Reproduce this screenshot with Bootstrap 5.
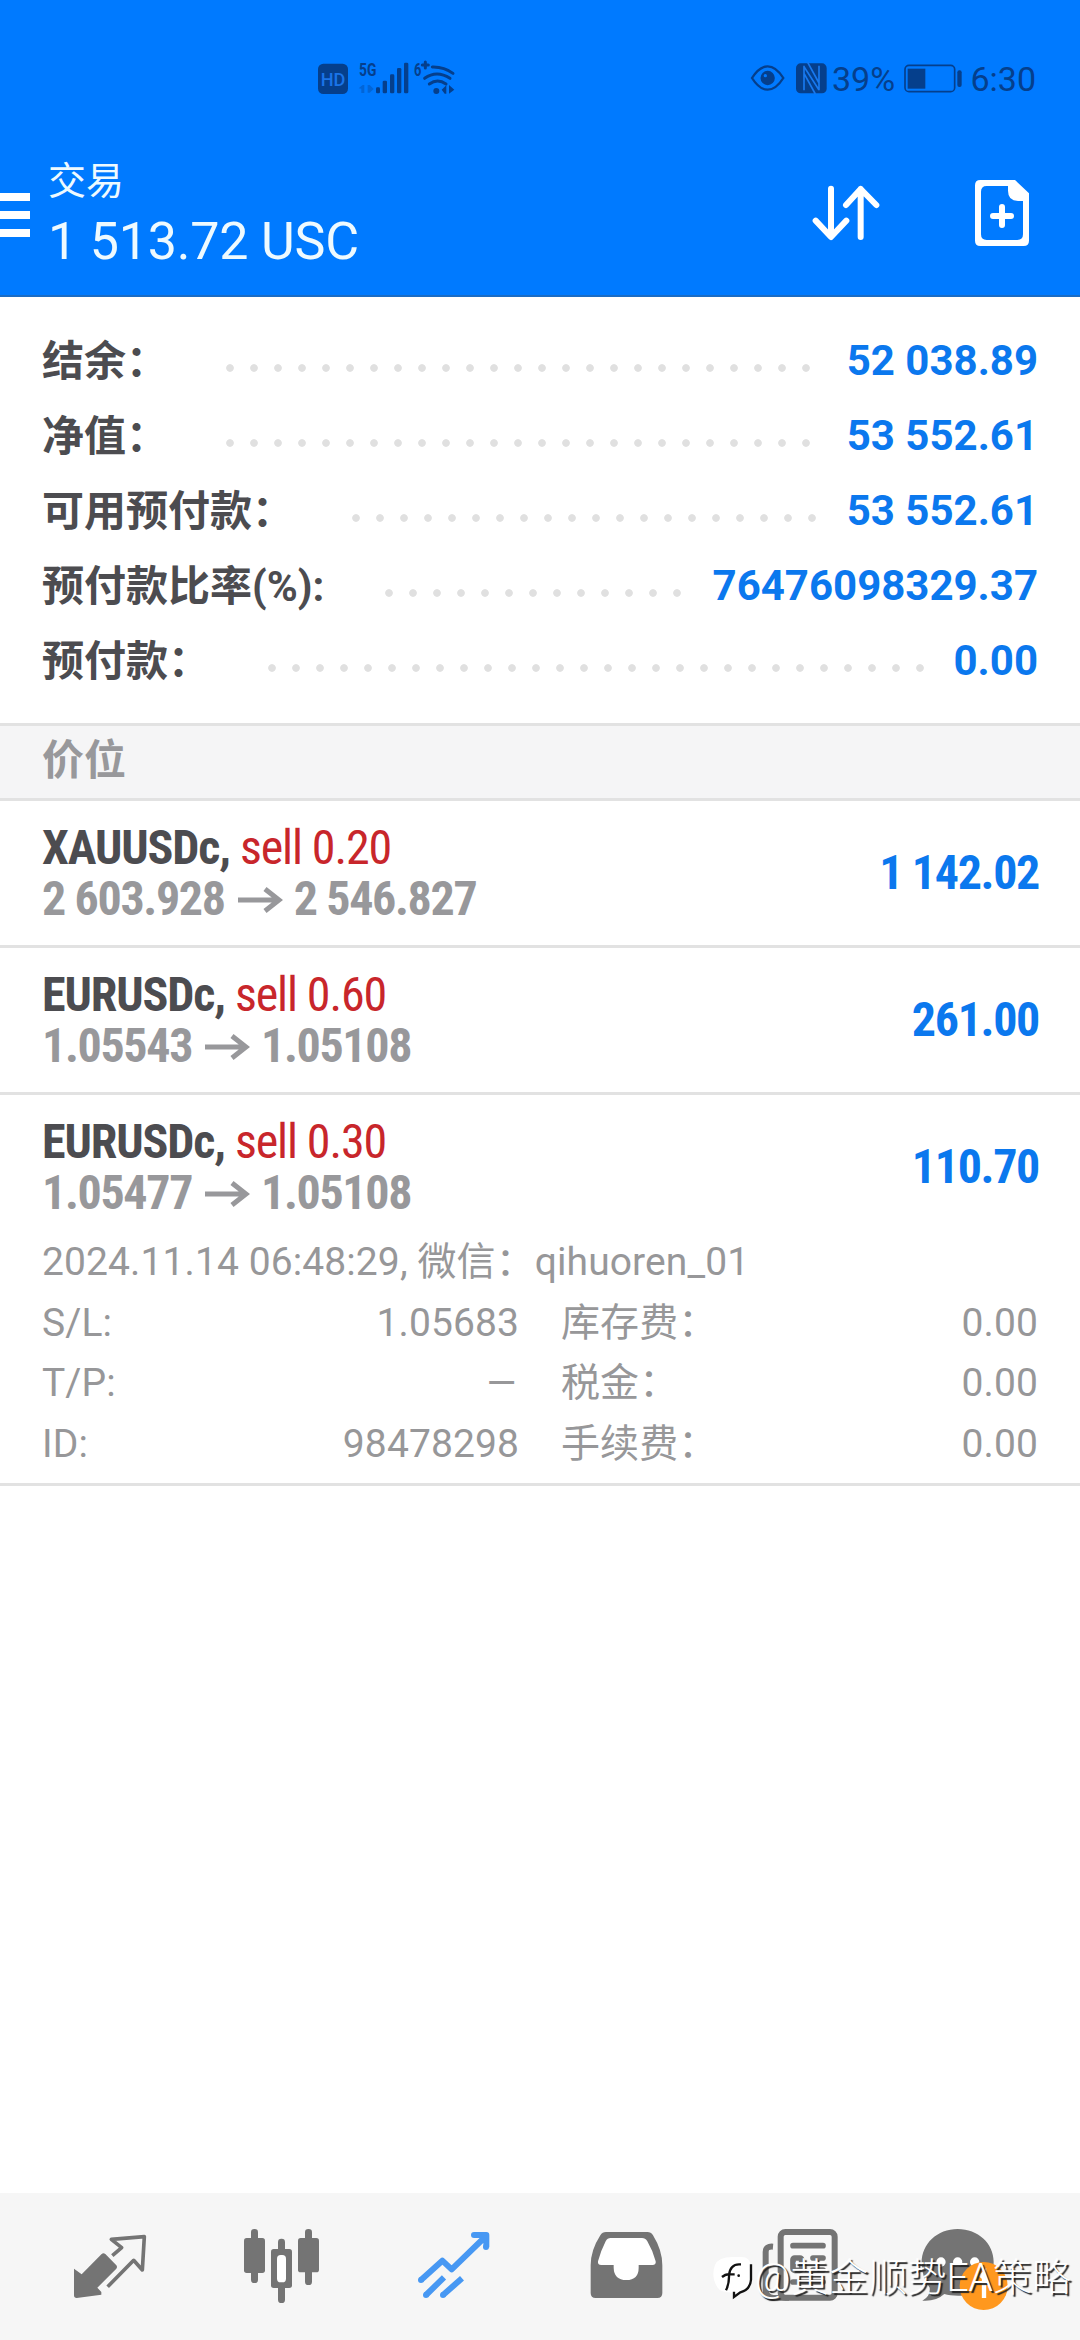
<!DOCTYPE html>
<html lang="zh-CN">
<head>
<meta charset="utf-8">
<meta name="viewport" content="width=device-width, initial-scale=1">
<title>交易</title>
<link rel="stylesheet" href="https://cdn.jsdelivr.net/npm/bootstrap@5.3.0/dist/css/bootstrap.min.css">
<style>
body{font-family:Roboto,"Noto Sans CJK SC",sans-serif;color:#4c4c50;background:#fff}
.screen{width:1080px;height:2340px}
svg{display:block;flex:none}
.app-head{height:297px;background:#007aff;border-bottom:2px solid #1b6cc4}
.status{height:80px;margin-top:40px;padding-left:300px;color:#053f8c;font-size:34px;line-height:78px}
.status-right{width:350px}
.charge{padding-left:2px}
.clock{padding:0 44px 0 5px}
.bar{height:175px}
.bar-title{font-size:38px;line-height:48px;color:#eefaff;padding-left:18px;padding-top:37px}
.bar-sum{font-size:52px;line-height:74px;letter-spacing:-.2px}
.summary{padding:26px 42px 25px}
.sum-row{height:75px;font-size:42px;line-height:75px;font-weight:700}
.sum-label{padding-top:1px}
.sum-wide{padding-right:3px}
.dots{height:8px;margin:15px 28px 0 58px;background:radial-gradient(circle at 4px 4px,#e0e0e0 3.4px,transparent 4.2px) 0 0/24px 8px repeat-x}
.blue{color:#0b78ee}
.band{height:78px;border-top:3px solid #e2e2e2;border-bottom:3px solid #e2e2e2;background:#f5f5f6;padding-left:42px;font-size:42px;line-height:70px;font-weight:700;color:#98989b}
.pos{border-bottom:3px solid #e2e2e2;padding:0 42px}
.pos-main{height:144px;font-size:48px;line-height:51px;font-weight:700}
.cond{font-family:"Roboto Condensed",Roboto,sans-serif;font-stretch:75%;white-space:nowrap;letter-spacing:-1.1px}
.cond .muted,.profit{letter-spacing:-1.35px}
.profit{padding-bottom:2px;margin-right:-1px}
.sell{color:#c8262b;font-weight:400}
.muted{color:#98989b}
.arrow{display:inline-block;margin:0 11px 5px 13px;vertical-align:middle}
.detail{font-size:39px;line-height:60.7px;letter-spacing:.1px;color:#979799;margin-top:-7px;padding-bottom:8px}
.dash{transform:scaleX(1.3);transform-origin:right}
.tabs{height:147px;background:#f6f6f6;padding:0 24px;color:#747474}
.wm{position:absolute;right:9px;bottom:32px;color:#fff;font-size:39px;line-height:60px;font-weight:300;text-shadow:2px 2px 1px #222}
</style>
</head>
<body>
<div class="screen d-flex flex-column position-relative overflow-hidden">
  <header class="app-head d-flex flex-column">
    <div class="status d-flex justify-content-between">
      <svg width="180" height="80" viewBox="0 0 540 240" fill="#053f8c">
        <rect x="54" y="71" width="90" height="91" rx="16"/>
        <text x="99" y="137" text-anchor="middle" font-size="57" font-weight="500" fill="#1a74e8" textLength="74" lengthAdjust="spacingAndGlyphs">HD</text>
        <text x="177" y="107" font-size="54" font-weight="700" textLength="52" lengthAdjust="spacingAndGlyphs">5G</text>
        <g opacity=".35"><path d="M176 145l12-10h5v24h-9v-13zM203 135h6l12 12-12 11h-6z"/></g>
        <rect x="228" y="142" width="12" height="18" rx="4"/><rect x="248" y="122" width="13" height="38" rx="4"/><rect x="270" y="103" width="13" height="57" rx="4"/><rect x="291" y="84" width="13" height="76" rx="4"/><rect x="312" y="68" width="13" height="92" rx="4"/>
        <text x="342" y="107" font-size="54" font-weight="700" textLength="22" lengthAdjust="spacingAndGlyphs">6</text>
        <path d="M367 75h18M376 66v18M397 81q35-1 62 19M374 115q36-26 76 0M388 132q25-18 50 0" fill="none" stroke="#053f8c" stroke-width="9" stroke-linecap="round"/>
        <circle cx="409" cy="153" r="9"/><path d="M425 149l14-13v25h-5zM447 135l16 14-16 12z"/>
      </svg>
      <div class="status-right d-flex">
        <svg width="100" height="80" viewBox="0 0 300 240" fill="none" stroke="#053f8c" stroke-width="7">
          <path d="M66 114Q88 79 113 79T160 114Q138 149 113 149T66 114Z"/><circle cx="113" cy="114" r="18" fill="#053f8c"/><circle cx="106" cy="107" r="5" fill="#007aff" stroke="none"/>
          <rect x="198" y="70" width="92" height="90" rx="14" fill="#053f8c" stroke="none"/>
          <path d="M222 77v74M267 77v74M222 80l45 70M233 67l34 62M222 100l34 62" stroke="#1879ef" stroke-width="5"/>
        </svg>
        <span class="charge">39%</span>
        <svg class="ms-auto" width="62" height="80" viewBox="0 0 186 240">
          <rect x="6" y="76" width="149" height="79" rx="12" fill="none" stroke="#053f8c" stroke-width="5"/><rect x="14" y="86" width="53" height="60" fill="#053f8c"/><rect x="163" y="91" width="13" height="50" rx="6" fill="#053f8c"/>
        </svg>
        <span class="clock">6:30</span>
      </div>
    </div>
    <div class="bar d-flex">
      <svg width="30" height="175" viewBox="0 0 30 175" fill="#fff"><path d="M0 73h30v8H0zM0 91h30v8H0zM0 109h30v8H0z"/></svg>
      <div class="bar-title"><div>交易</div><div class="bar-sum">1 513.72 USC</div></div>
      <svg class="ms-auto" width="270" height="175" viewBox="90 -90 810 525">
        <path d="M153 116v144M107 212l46 49 46-49M242 261V117M198 165l44-48 47 48" fill="none" stroke="#fff" stroke-width="18" stroke-linecap="round" stroke-linejoin="round"/>
        <path fill="#fff" fill-rule="evenodd" d="M601 90h104l42 40v142q0 16-16 16H601q-16 0-16-16V106q0-16 16-16zM620 108q-17 0-17 17v128q0 17 17 17h92q17 0 17-17V153h-14q-31 0-31-31V108z"/>
        <path d="M639 198h54M666 171v54" stroke="#fff" stroke-width="18" stroke-linecap="round"/>
      </svg>
    </div>
  </header>

  <section class="summary">
    <div class="sum-row d-flex"><span class="sum-label">结余：</span><i class="dots flex-fill align-self-center"></i><span class="blue">52 038.89</span></div>
    <div class="sum-row d-flex"><span class="sum-label">净值：</span><i class="dots flex-fill align-self-center"></i><span class="blue">53 552.61</span></div>
    <div class="sum-row d-flex"><span class="sum-label">可用预付款：</span><i class="dots flex-fill align-self-center"></i><span class="blue">53 552.61</span></div>
    <div class="sum-row d-flex"><span class="sum-label sum-wide">预付款比率(%):</span><i class="dots flex-fill align-self-center"></i><span class="blue">76476098329.37</span></div>
    <div class="sum-row d-flex"><span class="sum-label">预付款：</span><i class="dots flex-fill align-self-center"></i><span class="blue">0.00</span></div>
  </section>

  <div class="band">价位</div>

  <section>
    <div class="pos"><div class="pos-main d-flex align-items-center justify-content-between">
      <div class="cond"><div>XAUUSDc, <span class="sell">sell 0.20</span></div><div class="muted">2 603.928<svg class="arrow" width="45" height="26" viewBox="0 0 45 26" fill="none" stroke="currentColor" stroke-width="5"><path d="M0 13h41M27 2l14 11-14 11"/></svg>2 546.827</div></div>
      <div class="cond blue profit">1 142.02</div></div></div>
    <div class="pos"><div class="pos-main d-flex align-items-center justify-content-between">
      <div class="cond"><div>EURUSDc, <span class="sell">sell 0.60</span></div><div class="muted">1.05543<svg class="arrow" width="45" height="26" viewBox="0 0 45 26" fill="none" stroke="currentColor" stroke-width="5"><path d="M0 13h41M27 2l14 11-14 11"/></svg>1.05108</div></div>
      <div class="cond blue profit">261.00</div></div></div>
    <div class="pos"><div class="pos-main d-flex align-items-center justify-content-between">
      <div class="cond"><div>EURUSDc, <span class="sell">sell 0.30</span></div><div class="muted">1.05477<svg class="arrow" width="45" height="26" viewBox="0 0 45 26" fill="none" stroke="currentColor" stroke-width="5"><path d="M0 13h41M27 2l14 11-14 11"/></svg>1.05108</div></div>
      <div class="cond blue profit">110.70</div></div>
      <div class="detail">
        <div>2024.11.14 06:48:29, 微信：qihuoren_01</div>
        <div class="row" style="--bs-gutter-x:42px">
          <div class="col-6">
            <div class="d-flex justify-content-between"><span>S/L:</span><span>1.05683</span></div>
            <div class="d-flex justify-content-between"><span>T/P:</span><span class="dash">–</span></div>
            <div class="d-flex justify-content-between"><span>ID:</span><span>98478298</span></div>
          </div>
          <div class="col-6">
            <div class="d-flex justify-content-between"><span>库存费：</span><span>0.00</span></div>
            <div class="d-flex justify-content-between"><span>税金：</span><span>0.00</span></div>
            <div class="d-flex justify-content-between"><span>手续费：</span><span>0.00</span></div>
          </div>
        </div>
      </div>
    </div>
  </section>

  <nav class="tabs d-flex mt-auto">
    <svg width="172" height="147" viewBox="-48 39 516 441" fill="currentColor">
      <path d="M102 266l23 17 60-61q5-5 11 0l33 34q4 5 0 10l-57 57 12 13v8l-74 10q-8 0-8-8z"/>
      <path d="M217 227l28-24-31-25 99-8-6 100-26-29-78 79" fill="none" stroke="currentColor" stroke-width="11" stroke-linejoin="round"/>
    </svg>
    <svg width="172" height="147" viewBox="468 39 516 441" fill="currentColor">
      <rect x="612" y="174" width="63" height="105" rx="8"/><rect x="633" y="147" width="21" height="162" rx="10"/>
      <rect x="774" y="174" width="63" height="103" rx="8"/><rect x="795" y="147" width="21" height="168" rx="10"/>
      <rect x="714" y="176" width="21" height="193" rx="10"/><rect x="693" y="207" width="63" height="117" rx="8"/><rect x="711" y="225" width="27" height="82" rx="11" fill="#fff"/>
    </svg>
    <svg width="172" height="147" viewBox="-36 39 516 441" fill="none" stroke="#4798f3" stroke-width="18">
      <path d="M123 300l64-58 28 26L312 174M282 165h37v37M138 345l54-53M189 345l57-50" stroke-linejoin="round"/>
      <path d="M301 160h24v24z" fill="#4798f3" stroke="none"/>
      <g fill="#4798f3" stroke="none"><circle cx="123" cy="300" r="9"/><circle cx="138" cy="345" r="9"/><circle cx="189" cy="345" r="9"/><circle cx="282" cy="165" r="9"/><circle cx="318" cy="201" r="9"/></g>
    </svg>
    <svg width="172" height="147" viewBox="480 39 516 441" fill="currentColor">
      <path d="M678 156h124q11 0 17 10 28 45 28 90v83q0 15-15 15H647q-15 0-15-15v-83q0-45 29-90 6-10 17-10z"/>
      <path fill="#fff" d="M692 174h94q10 0 16 10 16 27 25 60 2 11-10 11h-41v8q0 37-37 37t-38-37v-8h-37q-12 0-10-11 9-33 23-60 5-10 15-10z"/>
    </svg>
    <svg width="172" height="147" viewBox="36 39 516 441" fill="currentColor">
      <path d="M219 200q-22-2-22 16v112q0 26 24 26" fill="none" stroke="currentColor" stroke-width="18"/>
      <path d="M207 345h60v17h-50z"/>
      <rect x="242" y="156" width="162" height="197" rx="14" fill="#f8f8f8" stroke="currentColor" stroke-width="18"/>
      <path d="M279 197h90M339 234h30M339 270h30M279 306h90" fill="none" stroke="currentColor" stroke-width="17" stroke-linecap="round"/><rect x="279" y="234" width="26" height="37" rx="5" fill="none" stroke="currentColor" stroke-width="17"/>
    </svg>
    <svg width="172" height="147" viewBox="552 39 516 441" fill="currentColor">
      <path d="M773 147c61 0 108 43 108 99s-40 100-98 101q-31 1-50-5-25 23-66 20 25-14 22-39-24-33-24-75c0-57 47-101 108-101z"/>
      <g fill="#fff"><circle cx="723" cy="246" r="14"/><circle cx="773" cy="246" r="14"/><circle cx="824" cy="246" r="14"/></g>
      <circle cx="851" cy="318" r="72" fill="#ff981e"/><path d="M840 292l12-12v74" fill="none" stroke="#fff" stroke-width="13"/>
    </svg>
  </nav>
  <div class="wm d-flex align-items-center">
    <svg width="43" height="46" viewBox="38 236 129 138">
      <path d="M47 266q10-24 52-24h27q28 0 28 29v36q0 32-30 42l-23 12v-12q-38 0-47-16-20-34-7-67z" fill="#fff"/>
      <path d="M155 264v46q-2 30-32 38l-19 14v-16" fill="none" stroke="#111" stroke-width="7"/>
      <path d="M68 302q12-10 22-8h16M80 342q10-20 9-46 4-32 30-32h6" fill="none" stroke="#111" stroke-width="7"/><circle cx="118" cy="298" r="4" fill="#111"/>
    </svg>
    <span>@黄金顺势EA策略</span>
  </div>
</div>
<script src="https://cdn.jsdelivr.net/npm/bootstrap@5.3.0/dist/js/bootstrap.bundle.min.js"></script>
</body>
</html>
